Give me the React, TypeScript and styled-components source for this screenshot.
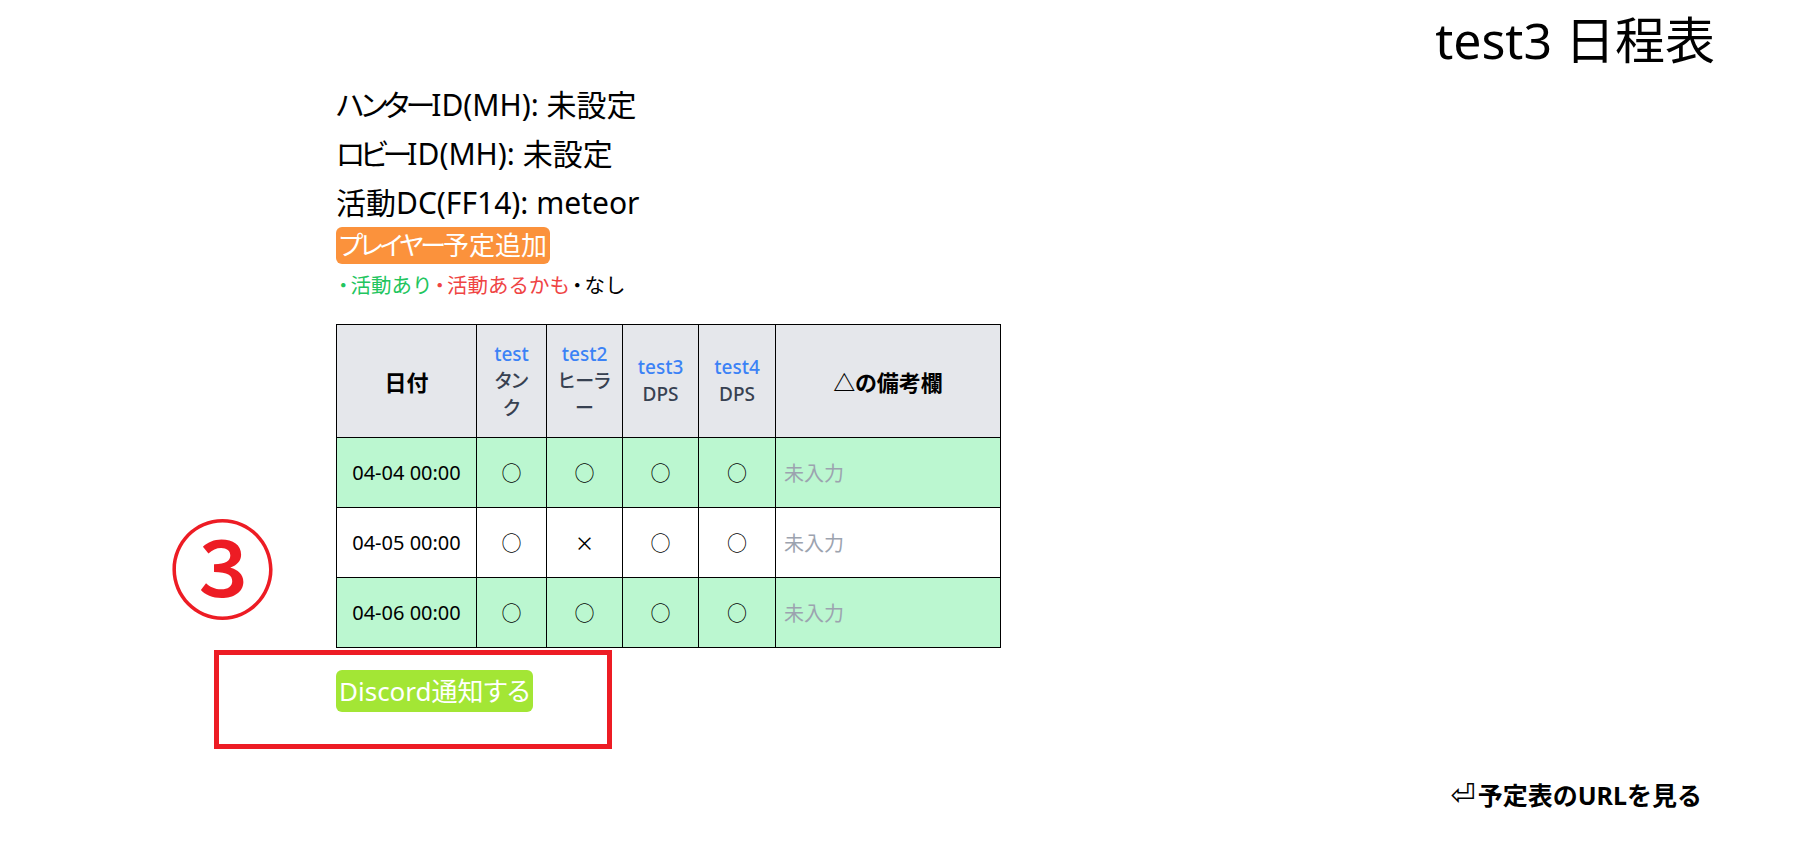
import React from "react";
import styled, { createGlobalStyle } from "styled-components";

const Global = createGlobalStyle`
  html, body { margin: 0; padding: 0; background: #fff; }
  body {
    font-family: "Noto Sans", "Noto Sans CJK JP", sans-serif;
    font-feature-settings: "palt" 1;
    color: #000;
  }
`;

const Page = styled.div`
  position: relative;
  min-height: 100vh;
  display: flex;
  flex-direction: column;
`;

const Header = styled.header`
  height: 80px;
  display: flex;
  align-items: center;
  justify-content: flex-end;
  padding-right: 104px;
`;

const Title = styled.h1`
  margin: 0;
  font-size: 50px;
  font-weight: 400;
  line-height: 80px;
  white-space: pre;
`;

const Main = styled.main`
  display: flex;
  flex-direction: column;
  align-items: flex-start;
  padding-left: 336px;
`;

const InfoLine = styled.div`
  font-size: 30px;
  line-height: 49px;
`;

const Kana = styled.span<{ $squeeze: number }>`
  letter-spacing: ${(p) => -p.$squeeze}px;
`;

const PillButton = styled.button<{ $bg: string; $h: number }>`
  border: none;
  margin: 0;
  background: ${(p) => p.$bg};
  color: #fff;
  font-family: inherit;
  font-feature-settings: "palt" 1;
  font-size: 26px;
  height: ${(p) => p.$h}px;
  line-height: ${(p) => p.$h}px;
  padding: 0 3px;
  border-radius: 6px;
  cursor: pointer;
`;

const Legend = styled.div`
  margin-top: 4px;
  font-size: 20.5px;
  line-height: 34px;
  font-feature-settings: normal;
`;

const LegendItem = styled.span<{ $color: string }>`
  color: ${(p) => p.$color};
`;

const Dot = styled.span`
  margin-left: -3px;
  letter-spacing: -3px;
`;

const Table = styled.table`
  margin-top: 22px;
  border-collapse: collapse;
  table-layout: fixed;
  width: 664px;
`;

const HeadCell = styled.th`
  background: #e5e7eb;
  border: 1px solid #000;
  padding: 15.5px 11px;
  text-align: center;
  vertical-align: middle;
`;

const HeadTitle = styled.span`
  font-size: 22px;
  font-weight: 700;
`;

const PlayerName = styled.div`
  color: #3b82f6;
  font-size: 19px;
  line-height: 27px;
  font-weight: 500;
`;

const PlayerRole = styled.div`
  color: #374151;
  font-size: 19px;
  line-height: 27px;
  font-weight: 500;
`;

const Row = styled.tr<{ $active: boolean }>`
  background: ${(p) => (p.$active ? "#bbf7d0" : "#fff")};
`;

const Cell = styled.td<{ $align?: string; $muted?: boolean }>`
  border: 1px solid #000;
  height: 69px;
  padding: 0 8px;
  font-size: 20px;
  text-align: ${(p) => p.$align ?? "center"};
  color: ${(p) => (p.$muted ? "#9ca3af" : "#000")};
  vertical-align: middle;
`;

const Mark = styled.span`
  font-family: "Noto Sans CJK JP", sans-serif;
  font-size: 20px;
`;

const Cross = styled.span`
  font-family: "Noto Sans", sans-serif;
  font-weight: 300;
  font-size: 29px;
`;

const DiscordWrap = styled.div`
  margin-top: 22px;
`;

const Footer = styled.footer`
  margin-top: auto;
  display: flex;
  justify-content: flex-end;
  padding: 0 117px 38px 0;
`;

const FooterLink = styled.a`
  display: flex;
  align-items: center;
  font-size: 25px;
  line-height: 36px;
  font-weight: 700;
  font-feature-settings: normal;
  color: #000;
  text-decoration: none;
  cursor: pointer;
`;

const ReturnGlyph = styled.span`
  font-family: "DejaVu Sans", sans-serif;
  font-weight: 400;
  font-size: 30px;
  margin-right: 2px;
`;

const CircledNumber = styled.div`
  position: absolute;
  left: 173px;
  top: 514px;
  width: 99px;
  height: 99px;
  display: flex;
  align-items: center;
  justify-content: center;
  font-family: "Noto Sans CJK JP", sans-serif;
  font-size: 107px;
  font-weight: 500;
  line-height: 1;
  color: #ed1c24;
`;

const HighlightBox = styled.div`
  position: absolute;
  left: 214px;
  top: 650px;
  width: 398px;
  height: 99px;
  box-sizing: border-box;
  border: 5px solid #ed1c24;
  pointer-events: none;
`;

const players = [
  { name: "test", role: "タンク" },
  { name: "test2", role: "ヒーラー" },
  { name: "test3", role: "DPS" },
  { name: "test4", role: "DPS" },
];

const rows = [
  { date: "04-04 00:00", marks: ["o", "o", "o", "o"], active: true },
  { date: "04-05 00:00", marks: ["o", "x", "o", "o"], active: false },
  { date: "04-06 00:00", marks: ["o", "o", "o", "o"], active: true },
];

const legend = [
  { label: "活動あり", color: "#22c55e" },
  { label: "活動あるかも", color: "#ef4444" },
  { label: "なし", color: "#000" },
];

const colWidths = [140, 70, 76, 76, 77, 225];

export default function App() {
  return (
    <Page>
      <Global />
      <Header>
        <Title>test3 日程表</Title>
      </Header>
      <Main>
        <InfoLine>
          <Kana $squeeze={4}>ハンター</Kana>ID(MH): 未設定
        </InfoLine>
        <InfoLine>
          <Kana $squeeze={5}>ロビー</Kana>ID(MH): 未設定
        </InfoLine>
        <InfoLine>活動DC(FF14): meteor</InfoLine>
        <PillButton $bg="#fb923c" $h={37}>
          <Kana $squeeze={3}>プレイヤー</Kana>予定追加
        </PillButton>
        <Legend>
          {legend.map((l) => (
            <LegendItem key={l.label} $color={l.color}>
              <Dot>・</Dot>
              {l.label}
            </LegendItem>
          ))}
        </Legend>
        <Table>
          <colgroup>
            {colWidths.map((w, i) => (
              <col key={i} style={{ width: w }} />
            ))}
          </colgroup>
          <thead>
            <tr>
              <HeadCell>
                <HeadTitle>日付</HeadTitle>
              </HeadCell>
              {players.map((p) => (
                <HeadCell key={p.name}>
                  <PlayerName>{p.name}</PlayerName>
                  <PlayerRole>{p.role}</PlayerRole>
                </HeadCell>
              ))}
              <HeadCell>
                <HeadTitle>△の備考欄</HeadTitle>
              </HeadCell>
            </tr>
          </thead>
          <tbody>
            {rows.map((r) => (
              <Row key={r.date} $active={r.active}>
                <Cell>{r.date}</Cell>
                {r.marks.map((m, i) => (
                  <Cell key={i}>{m === "o" ? <Mark>○</Mark> : <Cross>×</Cross>}</Cell>
                ))}
                <Cell $align="left" $muted>
                  未入力
                </Cell>
              </Row>
            ))}
          </tbody>
        </Table>
        <DiscordWrap>
          <PillButton $bg="#a3e635" $h={42}>Discord通知する</PillButton>
        </DiscordWrap>
      </Main>
      <Footer>
        <FooterLink>
          <ReturnGlyph>⏎</ReturnGlyph>予定表のURLを見る
        </FooterLink>
      </Footer>
      <CircledNumber>③</CircledNumber>
      <HighlightBox />
    </Page>
  );
}
